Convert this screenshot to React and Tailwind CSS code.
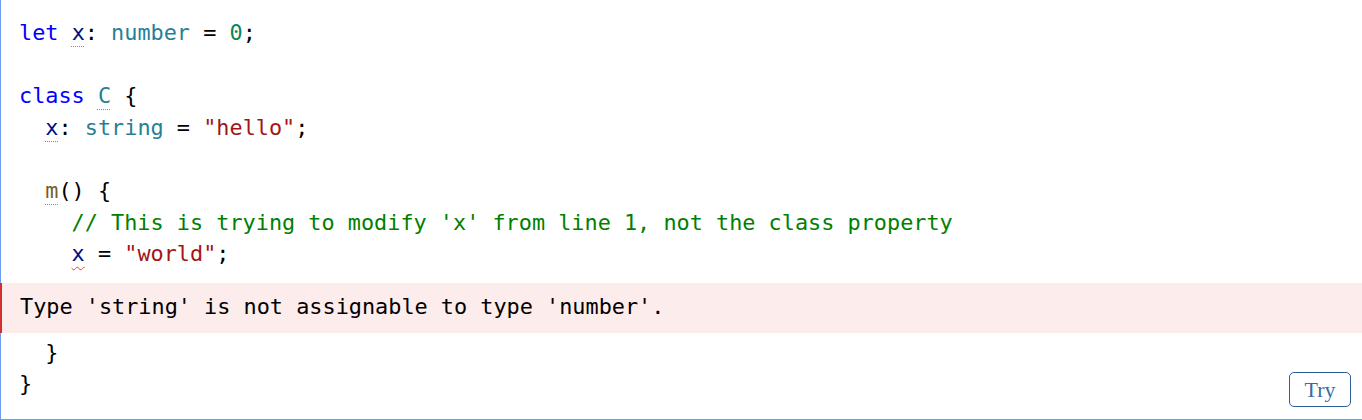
const mono = { fontFamily: '"DejaVu Sans Mono", "Liberation Mono", monospace' };

function Kw({ children }) {
  return <span className="text-[#0000ff]">{children}</span>;
}
function Ty({ children }) {
  return <span className="text-[#267f99]">{children}</span>;
}
function Str({ children }) {
  return <span className="text-[#a31515]">{children}</span>;
}
function Ref({ children, color = "text-[#001080]" }) {
  return (
    <span className={`${color} underline decoration-dotted decoration-[#888] underline-offset-[6px] decoration-1`}>
      {children}
    </span>
  );
}

function Line({ children, indent = 0 }) {
  return (
    <div className="h-[31.6px] leading-[31.6px] whitespace-pre">
      {" ".repeat(indent)}
      {children}
    </div>
  );
}

export default function App() {
  return (
    <div className="w-[1362px] h-[420px] bg-white border-l border-b border-[#6d9cf0] flex flex-col relative" style={mono}>
      <div className="pt-[17px] pl-[18px] text-[21.85px] text-black">
        <Line>
          <Kw>let</Kw> <Ref>x</Ref>: <Ty>number</Ty> = <span className="text-[#098658]">0</span>;
        </Line>
        <Line> </Line>
        <Line>
          <Kw>class</Kw> <Ref color="text-[#267f99]">C</Ref> {"{"}
        </Line>
        <Line indent={2}>
          <Ref>x</Ref>: <Ty>string</Ty> = <Str>"hello"</Str>;
        </Line>
        <Line> </Line>
        <Line indent={2}>
          <Ref color="text-[#795e26]">m</Ref>() {"{"}
        </Line>
        <Line indent={4}>
          <span className="text-[#008000]">// This is trying to modify 'x' from line 1, not the class property</span>
        </Line>
        <Line indent={4}>
          <span className="text-[#001080] underline decoration-wavy decoration-[#e0452a] underline-offset-[5px] decoration-1">x</span> = <Str>"world"</Str>;
        </Line>
      </div>
      <div className="mt-[13px] -ml-px h-[50px] bg-[#fdecec] border-l-2 border-[#d32f2f] flex items-center pl-[18px] text-[21.85px] text-black whitespace-pre">
        Type 'string' is not assignable to type 'number'.
      </div>
      <div className="pt-[4px] pl-[18px] text-[21.85px] text-black">
        <Line indent={2}>{"}"}</Line>
        <Line>{"}"}</Line>
      </div>
      <button
        className="absolute right-[11px] bottom-[12px] w-[62px] h-[35px] border border-[#2b5f99] rounded-[5px] bg-white text-[#3a6a9e] text-[22px] leading-none flex items-center justify-center"
        style={{ fontFamily: '"Liberation Serif", serif' }}
      >
        Try
      </button>
    </div>
  );
}
